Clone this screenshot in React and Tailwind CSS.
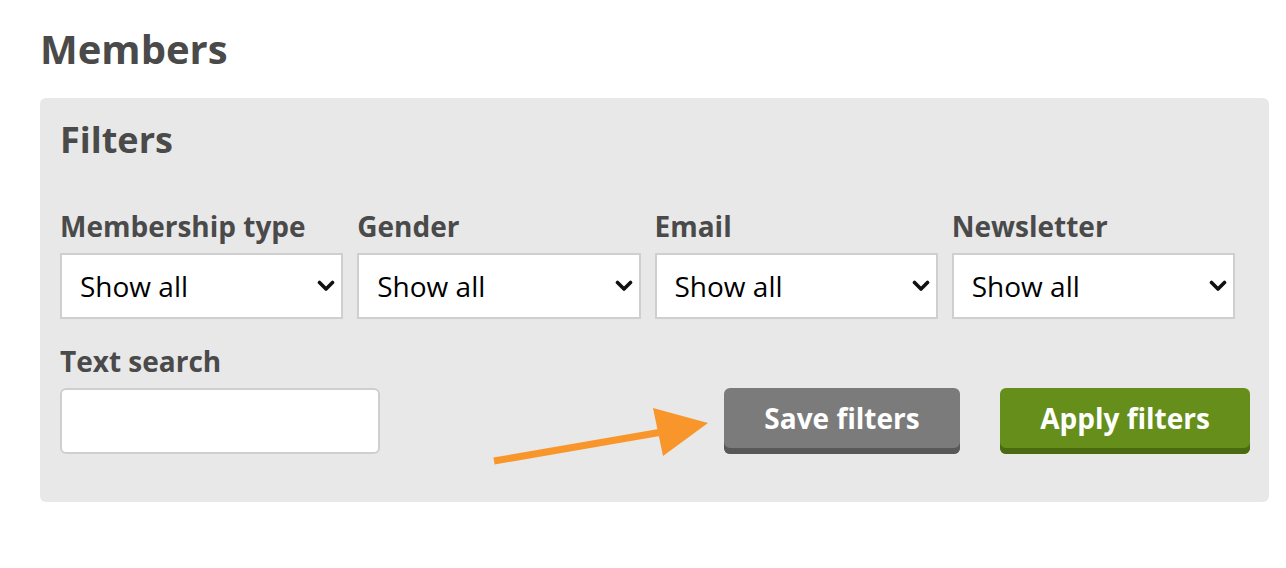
import React, { useState } from 'react';

const FILTERS = [
    { label: 'Membership type', name: 'membership' },
    { label: 'Gender', name: 'gender' },
    { label: 'Email', name: 'email' },
    { label: 'Newsletter', name: 'newsletter' },
];

const Chevron = () => (
    <svg width="18" height="12" viewBox="0 0 18 12" className="pointer-events-none absolute right-[8px] top-1/2 -translate-y-1/2">
        <path d="M2.5 2.5 L9 9 L15.5 2.5" fill="none" stroke="#111" strokeWidth="3.6" strokeLinecap="round" strokeLinejoin="round" />
    </svg>
);

const FilterSelect = ({ label, value, onChange }) => (
    <div className="pr-[14px]">
        <label className="block text-[28px] font-bold leading-[40px] text-[#4a4a4a]">{label}</label>
        <div className="relative mt-[7px]">
            <select
                value={value}
                onChange={onChange}
                className="h-[66px] w-full appearance-none border-2 border-[#cfcfcf] bg-white pl-[18px] text-[28px] text-black outline-none"
            >
                <option value="all">Show all</option>
                <option value="yes">Yes</option>
                <option value="no">No</option>
            </select>
            <Chevron />
        </div>
    </div>
);

const App = () => {
    const [values, setValues] = useState({ membership: 'all', gender: 'all', email: 'all', newsletter: 'all' });
    const [query, setQuery] = useState('');

    return (
        <div className="relative min-h-screen bg-white font-['Open_Sans',sans-serif]">
            <div className="pl-10 pt-[22px]">
                <h1 className="text-[40px] font-bold leading-[54px] text-[#4a4a4a]">Members</h1>

                {/* Filter panel */}
                <div className="mt-[22px] w-[1229px] rounded-md bg-[#e8e8e8] px-5 pb-[48px] pt-[14px]">
                    <h2 className="text-[36px] font-bold leading-[56px] text-[#4a4a4a]">Filters</h2>

                    <div className="mt-[38px] grid grid-cols-4">
                        {FILTERS.map(f => (
                            <FilterSelect
                                key={f.name}
                                label={f.label}
                                value={values[f.name]}
                                onChange={e => setValues({ ...values, [f.name]: e.target.value })}
                            />
                        ))}
                    </div>

                    <div className="mt-[22px] flex items-end">
                        <div>
                            <label className="block text-[28px] font-bold leading-[40px] text-[#4a4a4a]">Text search</label>
                            <input
                                value={query}
                                onChange={e => setQuery(e.target.value)}
                                className="mt-[7px] h-[66px] w-[320px] rounded-md border-2 border-[#cfcfcf] bg-white px-3 text-[28px] outline-none"
                            />
                        </div>
                        <div className="ml-auto mr-[-1px] flex gap-10">
                            <button className="h-[66px] w-[236px] rounded-md bg-[#7b7b7b] pb-[6px] text-[28px] font-bold text-white shadow-[inset_0_-6px_0_#585858]">
                                Save filters
                            </button>
                            <button className="h-[66px] w-[250px] rounded-md bg-[#658f1a] pb-[6px] text-[28px] font-bold text-white shadow-[inset_0_-6px_0_#4a6b12]">
                                Apply filters
                            </button>
                        </div>
                    </div>
                </div>
            </div>

            {/* annotation arrow pointing at the save button */}
            <svg className="pointer-events-none absolute left-[480px] top-[400px]" width="240" height="70" viewBox="480 400 240 70">
                <path d="M494 461 L662 432" stroke="#f8962b" strokeWidth="7" fill="none" />
                <polygon points="653,408 708,423 663,456" fill="#f8962b" />
            </svg>
        </div>
    );
};

export default App;
